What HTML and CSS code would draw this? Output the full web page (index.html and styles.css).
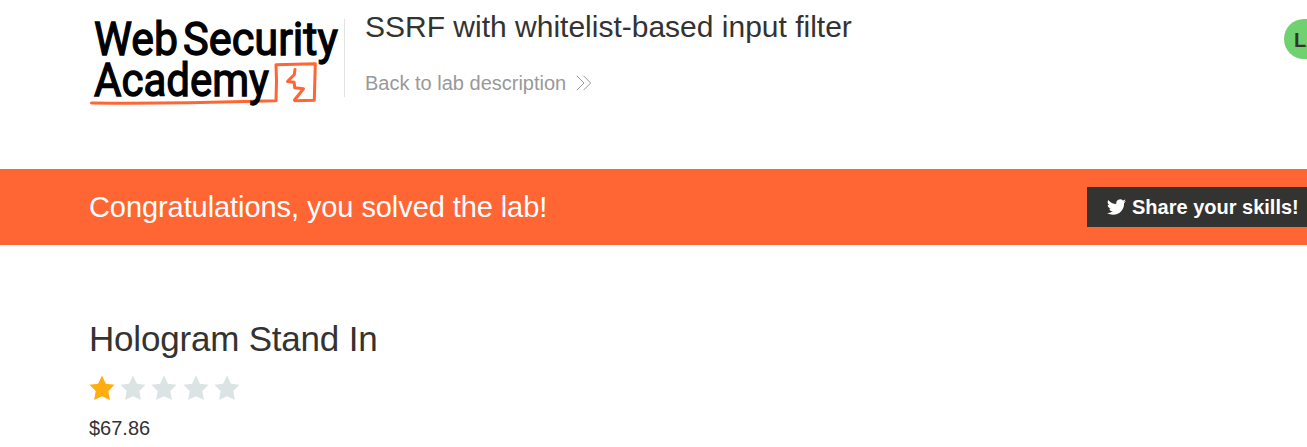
FILE: index.html
```
<!DOCTYPE html>
<html lang="en">
<head>
<meta charset="utf-8">
<title>SSRF with whitelist-based input filter</title>
<link rel="stylesheet" href="styles.css">
</head>
<body>
<header class="lab-header">
  <svg class="logo" viewBox="0 0 256 110" role="img" aria-label="Web Security Academy">
    <g class="logo-text">
      <text x="5" y="49.700" textLength="84" lengthAdjust="spacingAndGlyphs">Web</text>
      <text x="94" y="49.700" textLength="155" lengthAdjust="spacingAndGlyphs">Security</text>
    </g>
    <path class="logo-mark" d="M2.500 98C60 98.800 120 97.800 187 95.700L187.500 76L187 59.800L226.300 58.800L225.300 95.300L206 95.700"/>
    <path class="logo-mark" d="M206 64.500L205.300 69.500L198.500 76.500L205.200 77.300L205.700 82.800L214.500 83.800L205.500 95"/>
    <g class="logo-text">
      <text x="5" y="90.500" textLength="175" lengthAdjust="spacingAndGlyphs">Academy</text>
    </g>
  </svg>
  <div class="title-block">
    <h1 class="lab-title">SSRF with whitelist-based input filter</h1>
    <a class="back-link"><span class="back-text">Back to lab description</span>
      <svg class="chevrons" viewBox="0 0 16 16"><path d="M.8.8L8 8L.8 15.200M7.500.8L14.700 8L7.500 15.200"/></svg>
    </a>
  </div>
  <div class="status">LAB</div>
</header>
<section class="banner">
  <p class="banner-text">Congratulations, you solved the lab!</p>
  <a class="share">
    <svg class="bird" viewBox="0 0 24 24"><path d="M23.950 4.570a10 10 0 0 1-2.820.770 4.960 4.960 0 0 0 2.160-2.720 9.900 9.900 0 0 1-3.120 1.190 4.920 4.920 0 0 0-8.380 4.480A13.930 13.930 0 0 1 1.640 3.160a4.920 4.920 0 0 0 1.520 6.570 4.900 4.900 0 0 1-2.230-.610v.060a4.920 4.920 0 0 0 3.950 4.830 5 5 0 0 1-2.210.080 4.940 4.940 0 0 0 4.600 3.420A9.870 9.870 0 0 1 0 19.540a14 14 0 0 0 7.550 2.210c9.050 0 14-7.500 14-13.980 0-.210 0-.420-.020-.630a9.940 9.940 0 0 0 2.420-2.570z"/></svg>
    <span class="share-text">Share your skills!</span>
  </a>
</section>
<main class="product">
  <h2 class="product-name">Hologram Stand In</h2>
  <div class="rating">
    <svg class="star star-on" viewBox="0 0 26 26"><path d="M13 .5L16.900 8.700L25.500 9.800L19.300 15.900L20.900 25L13 21.300L5.100 25L6.700 15.900L.5 9.800L9.100 8.700z"/></svg>
    <svg class="star" viewBox="0 0 26 26"><path d="M13 .5L16.900 8.700L25.500 9.800L19.300 15.900L20.900 25L13 21.300L5.100 25L6.700 15.900L.5 9.800L9.100 8.700z"/></svg>
    <svg class="star" viewBox="0 0 26 26"><path d="M13 .5L16.900 8.700L25.500 9.800L19.300 15.900L20.900 25L13 21.300L5.100 25L6.700 15.900L.5 9.800L9.100 8.700z"/></svg>
    <svg class="star" viewBox="0 0 26 26"><path d="M13 .5L16.900 8.700L25.500 9.800L19.300 15.900L20.900 25L13 21.300L5.100 25L6.700 15.900L.5 9.800L9.100 8.700z"/></svg>
    <svg class="star" viewBox="0 0 26 26"><path d="M13 .5L16.900 8.700L25.500 9.800L19.300 15.900L20.900 25L13 21.300L5.100 25L6.700 15.900L.5 9.800L9.100 8.700z"/></svg>
  </div>
  <p class="price">$67.86</p>
</main>
</body>
</html>
```
FILE: styles.css
```
* { box-sizing: border-box; margin: 0; }
body {
  height: 447px;
  overflow: hidden;
  background: #fff;
  color: #333332;
  font-family: "Liberation Sans", Arial, sans-serif;
}
.lab-header { display: flex; height: 169px; padding: 5px 0 0 89px; overflow: hidden; }
.logo { flex: none; width: 256px; height: 110px; }
.logo-text { font: 400 46px Roboto, sans-serif; fill: #000; stroke: #000; stroke-width: 1.3px; }
.logo-mark { fill: none; stroke: #ff6633; stroke-width: 3; stroke-linejoin: round; stroke-linecap: round; }
.title-block {
  flex: none;
  width: 939px;
  height: 78px;
  margin: 14px 0 0 -1px;
  padding-left: 20px;
  border-left: 1px solid #e3e3e3;
}
.lab-title { margin-top: -9px; font-size: 30px; line-height: 34px; font-weight: 400; white-space: nowrap; }
.back-link { display: flex; align-items: center; gap: 10px; margin-top: 27px; color: #999; font-size: 20px; line-height: 24px; }
.chevrons { width: 16px; height: 16px; fill: none; stroke: #999; stroke-width: 1; }
.status {
  flex: none;
  width: 110px;
  height: 40px;
  margin: 14px 0 0 1px;
  padding-left: 10px;
  border-radius: 20px;
  background: #6fd16f;
  font-size: 20px;
  font-weight: 700;
  line-height: 42px;
}
.banner {
  display: flex;
  align-items: center;
  justify-content: space-between;
  height: 76px;
  padding-left: 89px;
  background: #ff6633;
  color: #fff;
}
.banner-text { font-size: 29px; letter-spacing: -.08px; }
.share { display: flex; align-items: center; gap: 6px; width: 220px; height: 40px; padding-left: 20px; background: #333332; font-size: 20px; font-weight: 700; white-space: nowrap; }
.bird { width: 19px; height: 20px; fill: #fff; }
.product { padding: 73px 0 0 89px; }
.product-name { font-size: 35px; line-height: 42px; font-weight: 400; letter-spacing: -.2px; }
.rating { display: flex; gap: 5.200px; margin-top: 15px; }
.star { width: 26px; height: 26px; fill: #dbe3e4; }
.star-on { fill: #ffad10; }
.price { margin-top: 15px; font-size: 20px; line-height: 24px; }
```
